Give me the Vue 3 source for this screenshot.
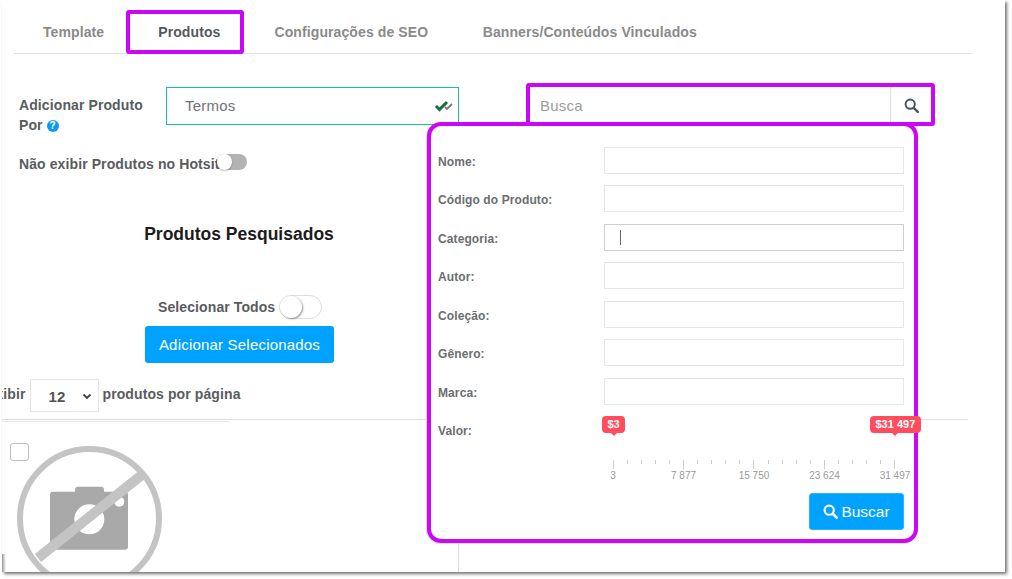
<script setup>
const fields = ['Nome:', 'Código do Produto:', 'Categoria:', 'Autor:', 'Coleção:', 'Gênero:', 'Marca:']
const ticks = Array.from({ length: 21 }, (_, i) => i % 5 === 0)
const scale = ['3', '7 877', '15 750', '23 624', '31 497']
</script>

<template>
  <div class="page">
    <main class="frame">
      <nav class="tabs">
        <span class="tab t1">Template</span>
        <span class="tab t2 active">Produtos</span>
        <span class="tab t3">Configurações de SEO</span>
        <span class="tab t4">Banners/Conteúdos Vinculados</span>
      </nav>

      <section class="top">
        <div class="left">
          <div class="add-row">
            <div class="add-label">Adicionar Produto<br />Por <span class="help">?</span></div>
            <div class="termos">
              <span class="termos-text">Termos</span>
              <svg class="checks" width="20" height="12" viewBox="0 0 20 12">
                <path d="M11 7l2 2 5-5" fill="none" stroke="#777" stroke-width="1.8" />
                <path d="M2 6l3.5 3.6L13 2" fill="none" stroke="#17703f" stroke-width="3" />
              </svg>
            </div>
          </div>
          <div class="hide-row">
            <span class="hide-text">Não exibir Produtos no Hotsite</span>
            <span class="switch small"><i></i></span>
          </div>
          <h2 class="searched">Produtos Pesquisados</h2>
          <div class="select-all">
            <span>Selecionar Todos</span>
            <span class="switch big"><i></i></span>
          </div>
          <button class="add-btn">Adicionar Selecionados</button>
          <div class="per-page">
            <span class="exibir">Exibir</span>
            <div class="count"><span>12</span>
              <svg width="10" height="7" viewBox="0 0 10 7"><path d="M1.5 1.5L5 5l3.5-3.5" fill="none" stroke="#444" stroke-width="1.8" /></svg>
            </div>
            <span class="pp">produtos por página</span>
          </div>
        </div>
        <div class="search">
          <input class="search-input" placeholder="Busca" />
          <div class="search-btn">
            <svg width="15" height="15" viewBox="0 0 15 15"><circle cx="6.2" cy="6.2" r="4.6" fill="none" stroke="#4a5560" stroke-width="2" /><path d="M9.8 9.8l4 4" stroke="#4a5560" stroke-width="2.4" stroke-linecap="round" /></svg>
          </div>
        </div>
      </section>

      <div class="rule-long"></div>
      <div class="rule-short"></div>

      <section class="products">
        <div class="card">
          <span class="check"></span>
          <svg class="noimg" width="146" height="146" viewBox="0 0 146 146">
            <path fill="#a9a9a9" d="M37 46.700h22v-2q0-3 3-3h23q3 0 3 3v2h21q3 0 3 3v52q0 3-3 3H37q-3 0-3-3v-52q0-3 3-3z" />
            <circle cx="73.300" cy="74.300" r="15" fill="#fff" />
            <circle cx="103.300" cy="56.700" r="5" fill="#fff" />
            <circle cx="73.500" cy="73.500" r="69.500" fill="none" stroke="#c4c4c4" stroke-width="6" />
            <path d="M22 113L125.700 30" stroke="#c4c4c4" stroke-width="10" />
          </svg>
        </div>
        <div class="divider"></div>
      </section>

      <span class="edge"></span>
    </main>

    <div class="mark mark-tab"></div>
    <div class="mark mark-search"></div>

    <form class="panel" @submit.prevent>
      <div v-for="f in fields" :key="f" class="field">
        <label>{{ f }}</label>
        <div class="box" :class="{ focus: f === 'Categoria:' }"><i v-if="f === 'Categoria:'" class="caret"></i></div>
      </div>
      <div class="value-row">
        <label>Valor:</label>
        <div class="slider">
          <span class="badge b-min">$3</span>
          <span class="badge b-max">$31 497</span>
          <div class="ticks">
            <i v-for="(major, i) in ticks" :key="i" :class="{ major }"></i>
          </div>
          <div class="scale"><span v-for="s in scale" :key="s">{{ s }}</span></div>
        </div>
      </div>
      <div class="actions">
        <button class="find">
          <svg width="15" height="15" viewBox="0 0 16 16"><circle cx="6.600" cy="6.600" r="4.900" fill="none" stroke="#fff" stroke-width="2.300" /><path d="M10.400 10.400l4.200 4.200" stroke="#fff" stroke-width="2.800" stroke-linecap="round" /></svg>
          Buscar
        </button>
      </div>
    </form>
  </div>
</template>

<style>
html, body { margin: 0; background: #fff; overflow: hidden; }
</style>

<style scoped>
.page {
  position: relative;
  width: 1012px;
  height: 579px;
  background: #fff;
  font-family: "Liberation Sans", Arial, sans-serif;
  overflow: hidden;
}
.frame {
  position: relative;
  margin-left: 2px;
  width: 1003px;
  height: 572px;
  background: #fff;
  overflow: hidden;
  box-shadow: 2px 2px 3px rgba(0, 0, 0, .55);
}
.tabs {
  display: flex;
  margin-left: 12px;
  width: 957px;
  height: 53px;
  border-bottom: 1px solid #ddd;
  font-size: 14px;
  font-weight: 700;
  color: #8a8a8a;
  letter-spacing: .1px;
  line-height: 17px;
}
.tab { padding-top: 24px; white-space: nowrap; }
.t1 { margin-left: 29px; }
.t2 { margin-left: 54px; color: #55595c; }
.t3 { margin-left: 54px; }
.t4 { margin-left: 54.5px; }

.top {
  display: flex;
  height: 365px;
  box-sizing: border-box;
  padding-top: 33px;
}
.left { width: 524px; flex: none; }
.add-row { display: flex; padding-left: 17px; }
.add-label {
  width: 147px;
  font-size: 14px;
  font-weight: 700;
  letter-spacing: .1px;
  line-height: 20px;
  padding-top: 8px;
  color: #595c5f;
}
.help {
  display: inline-block;
  width: 12px;
  height: 12px;
  border-radius: 50%;
  background: #0d9bf2;
  color: #fff;
  font-size: 10px;
  line-height: 12px;
  text-align: center;
  vertical-align: 1px;
}
.termos {
  display: flex;
  align-items: center;
  justify-content: space-between;
  box-sizing: border-box;
  width: 293px;
  height: 38px;
  border: 1px solid #1abc9c;
  padding: 0 4px 0 18px;
  font-size: 15px;
  color: #6f7479;
  letter-spacing: .2px;
}
.termos-text { padding-bottom: 2px; }
.checks { flex: none; }
.hide-row { position: relative; display: flex; margin: 19px 0 0 17px; height: 20px; align-items: center; }
.hide-text {
  font-size: 14px;
  font-weight: 700;
  letter-spacing: .1px;
  color: #595c5f;
  white-space: nowrap;
}
.switch { display: inline-block; position: relative; box-sizing: border-box; border-radius: 12px; flex: none; }
.switch i { position: absolute; border-radius: 50%; background: #fff; }
.switch.small {
  position: absolute;
  left: 198px;
  top: 0;
  width: 30px;
  height: 16px;
  background: #b3b3b3;
}
.switch.small i { left: 0; top: 0; width: 15px; height: 16px; box-shadow: 0 1px 2px rgba(0, 0, 0, .25); }
.switch.big {
  width: 43px;
  height: 24px;
  border: 1px solid #ddd;
  background: #fff;
}
.switch.big i { left: 0; top: 0; width: 22px; height: 22px; box-shadow: 1px 1px 2px rgba(0, 0, 0, .4); }
.searched {
  margin: 49px 0 0 0;
  width: 474px;
  text-align: center;
  font-size: 17.5px;
  font-weight: 700;
  line-height: 22px;
  color: #1c1c1c;
}
.select-all {
  display: flex;
  align-items: center;
  gap: 4px;
  margin: 50px 0 0 156px;
  height: 24px;
  font-size: 14px;
  font-weight: 700;
  letter-spacing: .1px;
  color: #595c5f;
}
.add-btn {
  display: block;
  margin: 7px 0 0 143px;
  width: 189px;
  height: 37px;
  border: 0;
  border-radius: 3px;
  background: #00a2ff;
  color: #fff;
  font: 15px "Liberation Sans", Arial, sans-serif;
  letter-spacing: .2px;
}
.per-page {
  display: flex;
  align-items: center;
  gap: 4px;
  margin: 16px 0 0 -16px;
  height: 33px;
  font-size: 14px;
  font-weight: 700;
  letter-spacing: .1px;
  color: #595c5f;
}
.exibir, .pp { padding-bottom: 3px; }
.count {
  display: flex;
  align-items: center;
  justify-content: space-between;
  box-sizing: border-box;
  width: 69px;
  height: 33px;
  border: 1px solid #e3e3e3;
  padding: 2px 6px 0 18px;
  font-size: 15px;
  color: #555;
}
.search { display: flex; width: 404px; height: 36px; margin-left: 1px; }
.search-input {
  flex: 1;
  min-width: 0;
  box-sizing: border-box;
  height: 36px;
  border: 0;
  outline: 0;
  padding: 0 0 0 13px;
  font: 15px "Liberation Sans", Arial, sans-serif;
  letter-spacing: .2px;
}
.search-input::placeholder { color: #9c9c9c; opacity: 1; }
.search-btn {
  display: flex;
  align-items: center;
  justify-content: center;
  width: 40px;
  border-left: 1px solid #ddd;
}
.rule-long { height: 1px; width: 966px; background: #ddd; }
.rule-short { height: 1px; width: 227px; margin-top: 1px; background: #e8e8e8; }
.products { display: flex; height: 150px; }
.card { position: relative; width: 456px; flex: none; }
.check {
  display: block;
  position: absolute;
  left: 8px;
  top: 21px;
  box-sizing: border-box;
  width: 19px;
  height: 18px;
  border: 1px solid #bdbdbd;
  border-radius: 3px;
  background: #fff;
  z-index: 1;
}
.noimg { position: absolute; left: 14px; top: 23px; }
.divider { width: 1px; background: #ddd; }
.edge {
  position: absolute;
  left: 0;
  bottom: 0;
  width: 4px;
  height: 18px;
  background: linear-gradient(90deg, #999, rgba(255, 255, 255, 0));
}

.mark {
  position: absolute;
  box-sizing: border-box;
  border: 4px solid #cc07f5;
  border-radius: 3px;
  pointer-events: none;
  z-index: 3;
}
.mark-tab { left: 126px; top: 10px; width: 118px; height: 44px; }
.mark-search { left: 526px; top: 83px; width: 409px; height: 43px; }

.panel {
  position: absolute;
  left: 427px;
  top: 122px;
  z-index: 2;
  box-sizing: border-box;
  width: 491px;
  height: 421px;
  border: 4px solid #cc07f5;
  border-radius: 14px;
  background: #fff;
  box-shadow: -1px 1px 0 #ddd;
  padding: 20.75px 10px 0 7px;
}
.field {
  display: flex;
  align-items: center;
  height: 27px;
  margin-bottom: 11.5px;
}
label {
  width: 166px;
  flex: none;
  font-size: 12px;
  font-weight: 700;
  letter-spacing: .1px;
  color: #6b6e70;
  padding-top: 3px;
}
.box {
  position: relative;
  box-sizing: border-box;
  width: 300px;
  height: 27px;
  border: 1px solid #e6e6e6;
}
.box.focus { border-color: #cfcfcf; }
.caret { position: absolute; left: 15px; top: 5px; width: 1px; height: 15px; background: #666; }
.value-row { display: flex; }
.value-row label { padding-top: 8px; }
.slider { position: relative; width: 300px; height: 76px; }
.badge {
  position: absolute;
  top: 0;
  height: 17px;
  line-height: 16px;
  padding: 0 5.5px;
  border-radius: 4px;
  background: #ff4d5e;
  color: #fff;
  font-size: 11px;
  font-weight: 700;
  white-space: nowrap;
}
.badge::after {
  content: "";
  position: absolute;
  left: 50%;
  bottom: -3px;
  margin-left: -3px;
  border: 3px solid transparent;
  border-top-color: #ff4d5e;
  border-bottom: 0;
}
.b-min { left: -2px; }
.b-max { left: 266px; }
.ticks {
  position: absolute;
  left: 9px;
  top: 44px;
  display: flex;
  justify-content: space-between;
  width: 282px;
}
.ticks i { width: 1px; height: 4px; background: #d0d0d0; }
.ticks i.major { height: 9px; }
.scale { position: absolute; left: 9px; top: 54px; width: 282px; height: 12px; }
.scale span {
  position: absolute;
  transform: translateX(-50%);
  font-size: 10px;
  line-height: 12px;
  color: #9a9a9a;
  white-space: nowrap;
}
.scale span:nth-child(1) { left: 0; }
.scale span:nth-child(2) { left: 25%; }
.scale span:nth-child(3) { left: 50%; }
.scale span:nth-child(4) { left: 75%; }
.scale span:nth-child(5) { left: 100%; }
.actions { display: flex; justify-content: flex-end; margin-top: .75px; }
.find {
  display: flex;
  align-items: center;
  justify-content: center;
  gap: 3px;
  box-sizing: border-box;
  width: 95px;
  height: 37px;
  border: 1px solid #2fb3fa;
  border-radius: 3px;
  background: #00a2ff;
  color: #fff;
  font: 15.5px "Liberation Sans", Arial, sans-serif;
}
</style>
